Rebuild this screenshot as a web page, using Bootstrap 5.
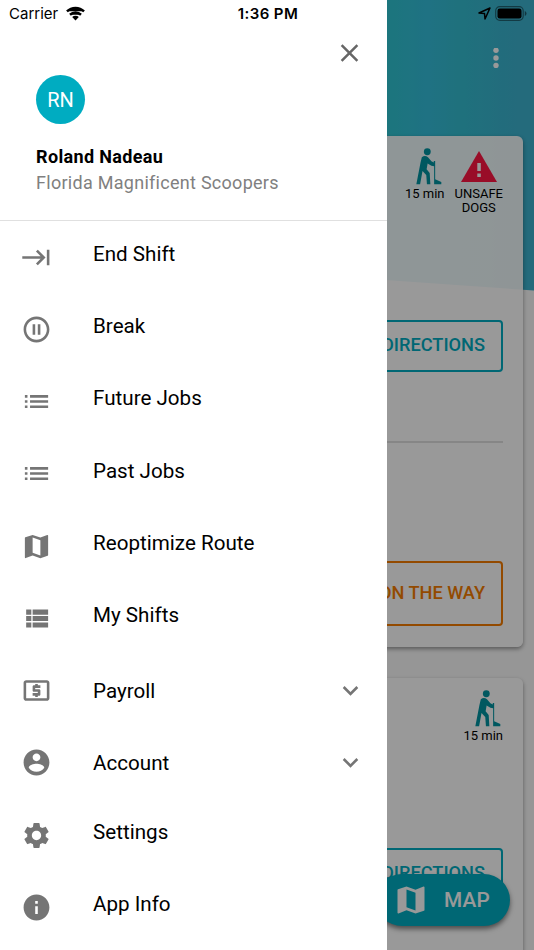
<!DOCTYPE html>
<html lang="en">
<head>
<meta charset="utf-8">
<meta name="viewport" content="width=device-width, initial-scale=1">
<title>Jobs</title>
<link href="https://cdn.jsdelivr.net/npm/bootstrap@5.3.0/dist/css/bootstrap.min.css" rel="stylesheet">
<style>
body{font-family:Roboto,sans-serif;color:#000;background:#fafafa;height:950px;width:534px;line-height:1.2}
svg{display:block;flex:none;fill:currentColor}
.screen{height:950px;width:534px}
.status-bar{z-index:30;height:27px;font-family:Inter,sans-serif;font-size:15px}
.status-left{padding-left:9px}
.status-right{padding-right:7px}
.status-time{font-weight:600;letter-spacing:.4px}
.hero{height:290.500px;background:linear-gradient(90deg,#2fc5d0 72%,#34bedb 80%,#34bdd0 86%,#3cb2cf 97%);clip-path:polygon(0 0,100% 0,100% 100%,0 87%)}
.jobs{padding:48px 11px 0}
.app-tools{height:20px;padding-right:20px;color:#fff;margin-bottom:68px}
.job-card{border:0;border-radius:6px;background:rgba(255,255,255,.92);box-shadow:0 2px 4px rgba(0,0,0,.4);padding:12px 20px 20px}
.job-one{height:511px;margin-bottom:31px}
.job-two{height:300px}
.job-flags{height:172px;gap:10px;font-size:13px;line-height:14px;color:#000}
.job-two .job-flags{height:158px}
.flag svg{margin-bottom:2px}
.flag .teal-ink{margin-left:9px}
.teal-ink{color:#0093a0}
.red-ink{color:#ff1744}
.job-btn{--bs-btn-border-radius:4px;border-width:2px;font-size:18.2px;font-weight:500;padding:0 16px 2px;text-align:right;width:200px}
.btn-route{height:52px;color:#00acc1;border-color:#00acc1}
.btn-way{height:65px;color:#f57c00;border-color:#f57c00;margin-top:118px}
.job-rule{margin:69px 0 0;border-top-width:2px;border-color:#dfdfdf;opacity:1}
.map-fab{z-index:5;right:24px;bottom:24px;width:134px;height:52.500px;border-radius:27px;background:#00acc1;color:#fff;font-size:20.800px;font-weight:500;padding:0 20px 0 17px;letter-spacing:.2px;box-shadow:0 3px 5px rgba(0,0,0,.5)}
.fab-label{padding-top:2px}
.dimmer{z-index:10;background:rgba(0,0,0,.4)}
.drawer{z-index:20;width:387px;background:#fff}
.drawer-head{height:221px;padding:38px 22px 0 36px;border-bottom:1.5px solid #e0e0e0}
.drawer-close{color:#666}
.avatar{width:49px;height:49px;background:#00acc1;color:#fff;font-size:20px;margin-top:7px}
.user-name{font-size:18px;font-weight:700;letter-spacing:.35px;line-height:26px;margin-top:20px}
.user-org{font-size:18px;color:#808080;letter-spacing:.28px;line-height:26px}
.menu-row{height:72.25px;padding:0 21px;color:#000;font-size:20.600px;letter-spacing:.01px}
.menu-row svg{color:#757575}
.menu-label{margin-left:41px;padding-bottom:6px}
.menu-fold .menu-label{padding-bottom:0;padding-top:1px}
</style>
<script src="https://cdn.jsdelivr.net/npm/bootstrap@5.3.0/dist/js/bootstrap.bundle.min.js"></script>
</head>
<body>
<svg class="d-none">
<symbol id="map" viewBox="0 0 24 24"><path d="M20.5 3l-.16.03L15 5.1 9 3 3.36 4.9c-.21.07-.36.25-.36.48V20.5c0 .28.22.5.5.5l.16-.03L9 18.9l6 2.1 5.64-1.9c.21-.07.36-.25.36-.48V3.500c0-.28-.22-.5-.5-.5zM15 19l-6-2.110V5l6 2.110V19z"/></symbol>
<symbol id="list" viewBox="0 0 24 24"><path d="M3 13h2v-2H3v2zm0 4h2v-2H3v2zm0-8h2V7H3v2zm4 4h14v-2H7v2zm0 4h14v-2H7v2zM7 7v2h14V7H7z"/></symbol>
<symbol id="chev" viewBox="0 0 24 24"><path d="M7.410 8.590L12 13.170l4.590-4.580L18 10l-6 6-6-6 1.410-1.410z"/></symbol>
<symbol id="walker" viewBox="0 0 76 108"><circle cx="33" cy="11" r="10"/><path d="M17 27q9-7 18 0l10 12 7 3V38h4v53l18 8v7H53V53l-8-1-11-7-3 17 9 11 2 33H32l-2-27-11-12-7 39H1l12-62z"/></symbol>
</svg>
<div class="screen position-relative overflow-hidden">
  <div class="hero position-absolute top-0 start-0 w-100"></div>
  <main class="jobs position-relative">
    <div class="app-tools d-flex justify-content-end">
      <svg width="14" height="20" viewBox="0 0 14 20"><circle cx="7" cy="2.300" r="2.700"/><circle cx="7" cy="10" r="2.700"/><circle cx="7" cy="17.500" r="2.700"/></svg>
    </div>
    <section class="card job-card job-one">
      <div class="job-flags d-flex justify-content-end align-items-start text-center">
        <div class="flag d-flex flex-column align-items-center"><svg class="teal-ink" width="26" height="37"><use href="#walker"/></svg>15 min</div>
        <div class="flag d-flex flex-column align-items-center"><svg class="red-ink" width="36" height="37" viewBox="0 0 36 37"><path d="M18 3l18 31H0z"/><path fill="#fff" d="M16.300 15h3.500v8h-3.500zm0 10.500h3.500V29h-3.500z"/></svg>UNSAFE<br>DOGS</div>
      </div>
      <button class="btn job-btn btn-route align-self-end">DIRECTIONS</button>
      <hr class="job-rule">
      <button class="btn job-btn btn-way align-self-end">ON THE WAY</button>
    </section>
    <section class="card job-card job-two">
      <div class="job-flags d-flex justify-content-end align-items-start text-center">
        <div class="flag d-flex flex-column align-items-center"><svg class="teal-ink" width="26" height="37"><use href="#walker"/></svg>15 min</div>
      </div>
      <button class="btn job-btn btn-route align-self-end">DIRECTIONS</button>
    </section>
  </main>
  <div class="map-fab position-absolute d-flex align-items-center justify-content-between"><svg width="36" height="36"><use href="#map"/></svg><span class="fab-label">MAP</span></div>
  <div class="dimmer position-absolute top-0 start-0 w-100 h-100"></div>
  <aside class="drawer position-absolute top-0 start-0 h-100">
    <header class="drawer-head d-flex flex-column">
      <svg class="drawer-close align-self-end" width="31" height="30" viewBox="0 0 24 24"><path d="M19 6.410L17.590 5 12 10.590 6.410 5 5 6.410 10.590 12 5 17.590 6.410 19 12 13.410 17.590 19 19 17.590 13.410 12z"/></svg>
      <div class="avatar rounded-circle d-flex align-items-center justify-content-center">RN</div>
      <div class="user-name">Roland Nadeau</div>
      <div class="user-org">Florida Magnificent Scoopers</div>
    </header>
    <nav class="d-flex flex-column">
      <a class="menu-row d-flex align-items-center text-decoration-none"><svg width="31" height="31" viewBox="0 0 24 24"><path d="M11.590 7.410L15.170 11H1v2h14.170l-3.590 3.590L13 18l6-6-6-6-1.410 1.410zM20 6v12h2V6h-2z"/></svg><span class="menu-label">End Shift</span></a>
      <a class="menu-row d-flex align-items-center text-decoration-none"><svg width="31" height="31" viewBox="0 0 24 24"><path d="M9 16h2V8H9v8zm3-14C6.480 2 2 6.480 2 12s4.480 10 10 10 10-4.480 10-10S17.520 2 12 2zm0 18c-4.410 0-8-3.590-8-8s3.590-8 8-8 8 3.590 8 8-3.590 8-8 8zm1-4h2V8h-2v8z"/></svg><span class="menu-label">Break</span></a>
      <a class="menu-row d-flex align-items-center text-decoration-none"><svg width="31" height="31"><use href="#list"/></svg><span class="menu-label">Future Jobs</span></a>
      <a class="menu-row d-flex align-items-center text-decoration-none"><svg width="31" height="31"><use href="#list"/></svg><span class="menu-label">Past Jobs</span></a>
      <a class="menu-row d-flex align-items-center text-decoration-none"><svg width="31" height="31"><use href="#map"/></svg><span class="menu-label">Reoptimize Route</span></a>
      <a class="menu-row d-flex align-items-center text-decoration-none"><svg width="31" height="31" viewBox="0 0 24 24"><path d="M4 14h4v-4H4v4zm0 5h4v-4H4v4zM4 9h4V5H4v4zm5 5h12v-4H9v4zm0 5h12v-4H9v4zM9 5v4h12V5H9z"/></svg><span class="menu-label">My Shifts</span></a>
      <a class="menu-row menu-fold d-flex align-items-center text-decoration-none"><svg width="31" height="31" viewBox="0 0 24 24"><path d="M11 17h2v-1h1c.55 0 1-.45 1-1v-3c0-.55-.45-1-1-1h-3v-1h4V8h-2V7h-2v1h-1c-.55 0-1 .45-1 1v3c0 .55.45 1 1 1h3v1H9v2h2v1zm9-13H4c-1.110 0-1.990.89-1.990 2L2 18c0 1.110.89 2 2 2h16c1.110 0 2-.89 2-2V6c0-1.110-.89-2-2-2zm0 14H4V6h16v12z"/></svg><span class="menu-label me-auto">Payroll</span><svg width="31" height="31"><use href="#chev"/></svg></a>
      <a class="menu-row menu-fold d-flex align-items-center text-decoration-none"><svg width="31" height="31" viewBox="0 0 24 24"><path d="M12 2C6.480 2 2 6.480 2 12s4.480 10 10 10 10-4.480 10-10S17.520 2 12 2zm0 3c1.660 0 3 1.340 3 3s-1.340 3-3 3-3-1.340-3-3 1.340-3 3-3zm0 14.200c-2.500 0-4.710-1.280-6-3.220.03-1.990 4-3.080 6-3.080 1.990 0 5.970 1.090 6 3.080-1.290 1.940-3.500 3.220-6 3.220z"/></svg><span class="menu-label me-auto">Account</span><svg width="31" height="31"><use href="#chev"/></svg></a>
      <a class="menu-row d-flex align-items-center text-decoration-none"><svg width="31" height="31" viewBox="0 0 24 24"><path d="M19.140 12.940c.04-.3.06-.61.06-.94 0-.32-.02-.64-.07-.94l2.030-1.580c.18-.14.23-.41.12-.61l-1.920-3.320c-.12-.22-.37-.29-.59-.22l-2.390.96c-.5-.38-1.030-.7-1.620-.94l-.36-2.540c-.04-.24-.24-.41-.48-.41h-3.840c-.24 0-.43.17-.47.41l-.36 2.540c-.59.24-1.130.57-1.620.94l-2.390-.96c-.22-.08-.47 0-.59.22L2.740 8.870c-.12.21-.08.47.12.61l2.030 1.580c-.05.3-.09.63-.09.94s.02.64.07.94l-2.030 1.580c-.18.14-.23.41-.12.61l1.920 3.320c.12.22.37.29.59.22l2.390-.96c.5.38 1.030.7 1.620.94l.36 2.540c.05.24.24.41.48.41h3.840c.24 0 .44-.17.47-.41l.36-2.540c.59-.24 1.130-.56 1.620-.94l2.390.96c.22.08.47 0 .59-.22l1.920-3.320c.12-.22.07-.47-.12-.61l-2.010-1.580zM12 15.600c-1.980 0-3.600-1.620-3.600-3.600s1.620-3.600 3.600-3.600 3.600 1.620 3.600 3.600-1.620 3.600-3.600 3.600z"/></svg><span class="menu-label">Settings</span></a>
      <a class="menu-row d-flex align-items-center text-decoration-none"><svg width="31" height="31" viewBox="0 0 24 24"><path d="M12 2C6.480 2 2 6.480 2 12s4.480 10 10 10 10-4.480 10-10S17.520 2 12 2zm1 15h-2v-6h2v6zm0-8h-2V7h2v2z"/></svg><span class="menu-label">App Info</span></a>
    </nav>
  </aside>
  <div class="status-bar position-absolute top-0 start-0 w-100 d-flex align-items-center">
    <div class="status-left col d-flex align-items-center gap-2">Carrier
      <svg width="19" height="15" viewBox="0 0 20 15" fill="none" stroke="#000" stroke-width="2.600"><path d="M1 5.200a13 13 0 0 1 18 0M4.200 8.800a8.500 8.500 0 0 1 11.600 0"/><path fill="#000" stroke="none" d="M6.500 11.300a5 5 0 0 1 7 0L10 14.800z"/></svg></div>
    <div class="status-time">1:36 PM</div>
    <div class="status-right col d-flex align-items-center justify-content-end gap-1">
      <svg width="13" height="13" viewBox="0 0 13 13"><path fill="none" stroke="#000" stroke-width="1.500" stroke-linejoin="round" d="M1 6l11-5-5 11-.5-5.500z"/></svg>
      <svg width="32" height="15" viewBox="0 0 32 15"><rect x=".7" y=".7" width="27.500" height="13.600" rx="4" fill="none" stroke="#000" stroke-opacity=".45" stroke-width="1.200"/><rect x="2.500" y="2.500" width="24" height="10" rx="2.300"/><path opacity=".5" d="M29.800 5q1.700.8 1.700 2.500t-1.700 2.500z"/></svg>
    </div>
  </div>
</div>
</body>
</html>
